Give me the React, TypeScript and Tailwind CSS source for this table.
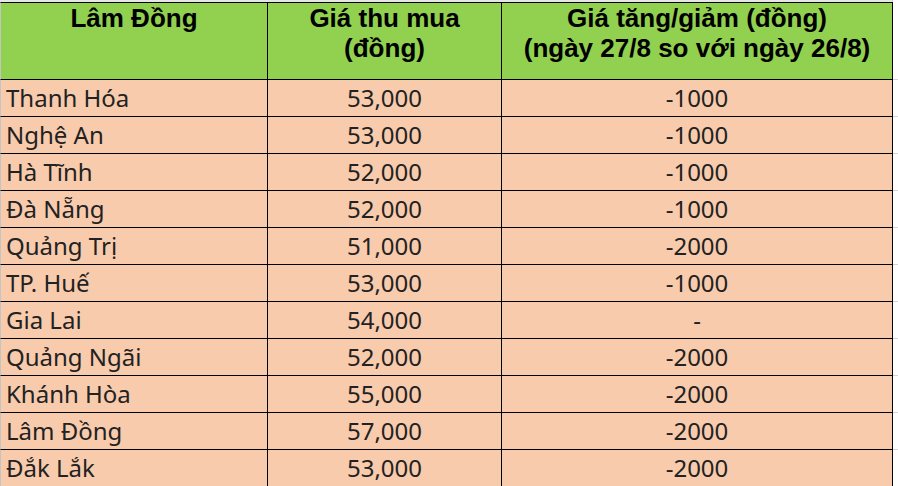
const rows: [string, string, string][] = [
  ['Thanh Hóa', '53,000', '-1000'],
  ['Nghệ An', '53,000', '-1000'],
  ['Hà Tĩnh', '52,000', '-1000'],
  ['Đà Nẵng', '52,000', '-1000'],
  ['Quảng Trị', '51,000', '-2000'],
  ['TP. Huế', '53,000', '-1000'],
  ['Gia Lai', '54,000', '-'],
  ['Quảng Ngãi', '52,000', '-2000'],
  ['Khánh Hòa', '55,000', '-2000'],
  ['Lâm Đồng', '57,000', '-2000'],
  ['Đắk Lắk', '53,000', '-2000'],
]

const head = "font-['Liberation_Sans',Arial,sans-serif] text-[26px] font-bold leading-[30px] text-black text-center"
const body = "font-['Noto_Sans',sans-serif] text-[24px] leading-[36px] text-[#222]"

export default function App() {
  return (
    <div className="h-[486px] w-[898px] overflow-hidden bg-white">
      <div className="flex h-[2px]">
        <div className="w-[892px] bg-[#e6e6e6]" />
        <div className="flex-1 border-l border-[#d4d4d4]" />
      </div>
      <div className="flex h-[78px]">
        <div className={`w-[268px] border-y border-r border-l border-y-black border-r-black border-l-[#c4c4c4] bg-[#92d050] ${head}`}>
          Lâm Đồng
        </div>
        <div className={`w-[234px] border-y border-r border-black bg-[#92d050] ${head}`}>
          Giá thu mua
          <br />
          (đồng)
        </div>
        <div className={`w-[391px] border-y border-r border-black bg-[#92d050] ${head}`}>
          Giá tăng/giảm (đồng)
          <br />
          (ngày 27/8 so với ngày 26/8)
        </div>
        <div className="flex-1 border-b border-[#d4d4d4]" />
      </div>
      {rows.map(([name, price, change]) => (
        <div key={name} className="flex h-[37px]">
          <div className={`w-[268px] border-b border-r border-l border-b-black border-r-black border-l-[#c4c4c4] bg-[#f8cbad] pl-[5px] ${body}`}>
            {name}
          </div>
          <div className={`w-[234px] border-b border-r border-black bg-[#f8cbad] text-center ${body}`}>
            {price}
          </div>
          <div className={`w-[391px] border-b border-r border-black bg-[#f8cbad] text-center ${body}`}>
            {change}
          </div>
          <div className="flex-1 border-b border-[#d4d4d4]" />
        </div>
      ))}
    </div>
  )
}
